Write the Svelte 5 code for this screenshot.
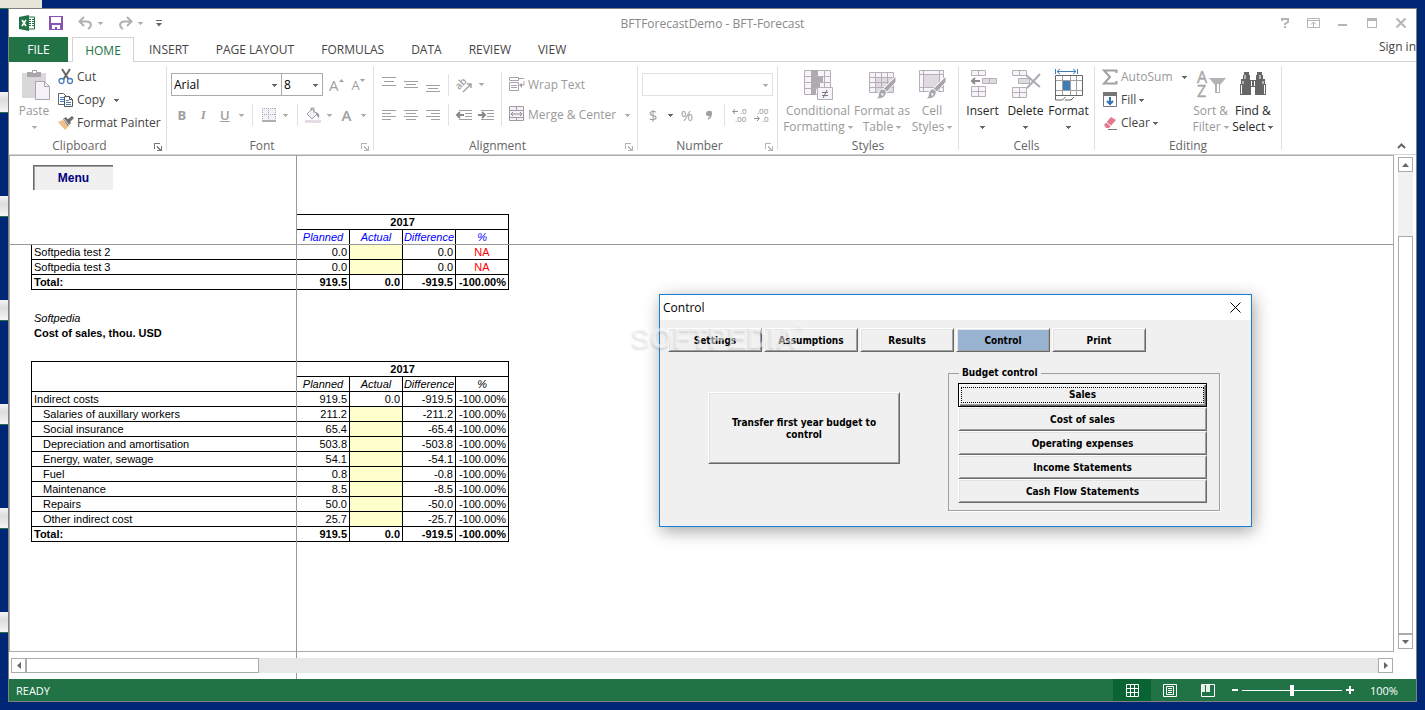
<script lang="ts">
  type Row = {
    label: string;
    planned: string;
    actual: string;
    difference: string;
    percent: string;
    kind?: 'item' | 'total';
  };

  const ribbonTabs = ['INSERT', 'PAGE LAYOUT', 'FORMULAS', 'DATA', 'REVIEW', 'VIEW'];
  const columns = ['Planned', 'Actual', 'Difference', '%'];
  const thumbs = [1, 2, 3, 4, 5, 6];

  const salesRows: Row[] = [
    { label: 'Softpedia test 2', planned: '0.0', actual: '', difference: '0.0', percent: 'NA' },
    { label: 'Softpedia test 3', planned: '0.0', actual: '', difference: '0.0', percent: 'NA' },
    { label: 'Total:', planned: '919.5', actual: '0.0', difference: '-919.5', percent: '-100.00%', kind: 'total' }
  ];

  const costRows: Row[] = [
    { label: 'Indirect costs', planned: '919.5', actual: '0.0', difference: '-919.5', percent: '-100.00%' },
    { label: 'Salaries of auxillary workers', planned: '211.2', actual: '', difference: '-211.2', percent: '-100.00%', kind: 'item' },
    { label: 'Social insurance', planned: '65.4', actual: '', difference: '-65.4', percent: '-100.00%', kind: 'item' },
    { label: 'Depreciation and amortisation', planned: '503.8', actual: '', difference: '-503.8', percent: '-100.00%', kind: 'item' },
    { label: 'Energy, water, sewage', planned: '54.1', actual: '', difference: '-54.1', percent: '-100.00%', kind: 'item' },
    { label: 'Fuel', planned: '0.8', actual: '', difference: '-0.8', percent: '-100.00%', kind: 'item' },
    { label: 'Maintenance', planned: '8.5', actual: '', difference: '-8.5', percent: '-100.00%', kind: 'item' },
    { label: 'Repairs', planned: '50.0', actual: '', difference: '-50.0', percent: '-100.00%', kind: 'item' },
    { label: 'Other indirect cost', planned: '25.7', actual: '', difference: '-25.7', percent: '-100.00%', kind: 'item' },
    { label: 'Total:', planned: '919.5', actual: '0.0', difference: '-919.5', percent: '-100.00%', kind: 'total' }
  ];

  const dialogTabs = ['Settings', 'Assumptions', 'Results', 'Control', 'Print'];
  const budgetLinks = ['Sales', 'Cost of sales', 'Operating expenses', 'Income Statements', 'Cash Flow Statements'];

  let activeTab = $state('Control');
  let activeBudget = $state('Sales');
  let dialogOpen = $state(true);
  let fontName = $state('Arial');
  let fontSize = $state('8');
  let zoom = $state(50);
</script>

{#snippet caret(dark = false)}
  <svg class="caret" class:dark width="5" height="3" viewBox="0 0 5 3" aria-hidden="true"><path d="M0 0h5v1H4v1H3v1H2V2H1V1H0z" /></svg>
{/snippet}

{#snippet launcher(dark = false)}
  <button class="launcher" class:dark aria-label="More options">
    <svg width="8" height="8" viewBox="0 0 8 8"><path d="M0 6V0h6v1H1v5zM3 3h1v1h1v1h1v1h1V3h1v5H3V7h2V6H4V5H3z" /></svg>
  </button>
{/snippet}

{#snippet lines(d: string)}
  <svg width="14" height="14" viewBox="0 0 14 14" aria-hidden="true"><path {d} fill="none" stroke="#a0a0a0" shape-rendering="crispEdges" /></svg>
{/snippet}

{#snippet brush()}
  <path d="M30 8v6l-9 10-4-3z" fill="#a8a6aa" stroke="#fff" stroke-width="1" />
  <path d="M16 21c3 0 5 2 4 5-1 3-4 5-10 5 3-2 2-4 3-7 1-2 2-3 3-3z" fill="#a8a6aa" stroke="#fff" />
  <path d="M15 25l3 1-2 2z" fill="#fff" />
{/snippet}

{#snippet gridColumns()}
  <colgroup>
    <col class="label-col" />
    {#each columns as column (column)}<col />{/each}
  </colgroup>
{/snippet}

{#snippet bodyRows(rows: Row[])}
  {#each rows as row}
    <tr class:total={row.kind === 'total'}>
      <th scope="row" class:item={row.kind === 'item'}>{row.label}</th>
      <td>{row.planned}</td>
      <td class:entry={row.actual === ''}>{row.actual}</td>
      <td>{row.difference}</td>
      <td class:na={row.percent === 'NA'}>{row.percent}</td>
    </tr>
  {/each}
{/snippet}

<div class="desktop">
  <div class="behind"></div>
  <div class="strip">
    {#each thumbs as thumb (thumb)}
      <span class="thumb"></span>
    {/each}
  </div>

  <div class="window">
    <header class="titlebar">
      <div class="quick">
        <svg class="logo" width="16" height="16" viewBox="0 0 16 16" aria-hidden="true">
          <path d="M9 2h6.500v12H9z" fill="#fff" stroke="#217346" />
          <path d="M10 4h2v1h-2zM13 4h2v1h-2zM10 6h2v1h-2zM13 6h2v1h-2zM10 8h2v1h-2zM13 8h2v1h-2zM10 10h2v1h-2zM13 10h2v1h-2z" fill="#217346" />
          <path d="M0 2l10-2v16L0 14z" fill="#217346" />
          <path d="M3 5l4 6M7 5l-4 6" stroke="#fff" stroke-width="1.6" />
        </svg>
        <button class="qat save" aria-label="Save">
          <svg width="14" height="14" viewBox="0 0 14 14"><path d="M0 0h14v14H0zM2 1v6h10V1zM3 9v4h3v-2h2v2h3V9z" fill="#8855b0" fill-rule="evenodd" /></svg>
        </button>
        <button class="qat" aria-label="Undo">
          <svg width="15" height="13" viewBox="0 0 15 13"><path d="M6 0L1.500 4.500 6 9M2 4.500h6.500c5 0 6 5 1.500 7.500" fill="none" stroke="#b0b0b0" stroke-width="2" /></svg>
        </button>
        <button class="qat drop" aria-label="Undo list">{@render caret()}</button>
        <button class="qat redo" aria-label="Redo">
          <svg width="15" height="13" viewBox="0 0 15 13"><path d="M9 0l4.500 4.500L9 9M13 4.500H6.500c-5 0-6 5-1.500 7.500" fill="none" stroke="#b0b0b0" stroke-width="2" /></svg>
        </button>
        <button class="qat drop" aria-label="Redo list">{@render caret()}</button>
        <button class="qat custom" aria-label="Customize toolbar">
          <svg width="6" height="7" viewBox="0 0 6 7"><path d="M0 0h6v1H0zM0 3h6L3 6.500z" fill="#666" /></svg>
        </button>
      </div>
      <span class="title">BFTForecastDemo - BFT-Forecast</span>
      <div class="controls">
        <button aria-label="Help"><svg width="8" height="10" viewBox="0 0 8 10"><path d="M1 3V1h6v3L4 6v1M4 8v2" fill="none" stroke="#b5b5b5" stroke-width="2" /></svg></button>
        <button aria-label="Ribbon display options"><svg width="13" height="10" viewBox="0 0 13 10"><path d="M.5.5h12v9H.5zM0 2.500h13M6.500 9V4M4 6.500L6.500 4 9 6.500" fill="none" stroke="#b5b5b5" /></svg></button>
        <button aria-label="Minimize"><svg width="10" height="10" viewBox="0 0 10 10"><path d="M0 6h9v2H0z" fill="#b5b5b5" /></svg></button>
        <button aria-label="Maximize"><svg width="10" height="10" viewBox="0 0 10 10"><path d="M0 0h10v10H0zM1 3v6h8V3z" fill="#b5b5b5" fill-rule="evenodd" /></svg></button>
        <button aria-label="Close"><svg width="10" height="10" viewBox="0 0 10 10"><path d="M.5.5l9 9M9.500.5l-9 9" stroke="#b5b5b5" stroke-width="2" /></svg></button>
      </div>
    </header>

    <nav class="tabs">
      <button class="file">FILE</button>
      <button class="home">HOME</button>
      <div class="others">
        {#each ribbonTabs as tab}
          <button class="tab">{tab}</button>
        {/each}
      </div>
      <a class="signin" href="#signin">Sign in</a>
    </nav>

    <div class="ribbon">
      <section class="group clipboard">
        <div class="content">
          <button class="big off paste">
            <svg width="32" height="34" viewBox="0 0 32 34" aria-hidden="true">
              <path d="M4 5h24v25H4z" fill="#d9d7da" />
              <path d="M9 4h5V2h5v2h4v5H9z" fill="#a9a7aa" />
              <path d="M15 3h3v2h-3z" fill="#fff" />
              <path d="M17.500 13.500h9l5 5v13h-14z" fill="#f5f1f8" stroke="#a9a7aa" />
              <path d="M26.500 13.500v5h5" fill="none" stroke="#a9a7aa" />
            </svg>
            <span>Paste</span>
            <span>{@render caret()}</span>
          </button>
          <div class="stack">
            <button class="small">
              <svg width="16" height="16" viewBox="0 0 16 16" aria-hidden="true">
                <path d="M4 0l7 11M12 0L5 11" stroke="#666" stroke-width="2" />
                <circle cx="3.500" cy="12" r="2.500" fill="#fff" stroke="#4a7ebb" stroke-width="1.300" />
                <circle cx="12" cy="12" r="2.500" fill="#fff" stroke="#4a7ebb" stroke-width="1.300" />
              </svg>
              Cut
            </button>
            <button class="small">
              <svg width="16" height="16" viewBox="0 0 16 16" aria-hidden="true">
                <path d="M.5 1.500h5l3 3v8h-8z" fill="#fff" stroke="#666" />
                <path d="M2 5.500h4M2 7.500h4M2 9.500h4" stroke="#4a7ebb" />
                <path d="M6.500 4.500h5l3 3v7h-8z" fill="#fff" stroke="#555" />
                <path d="M11.500 4.500v3h3" fill="none" stroke="#555" />
                <path d="M8 8.500h3M8 10.500h5M8 12.500h5" stroke="#4a7ebb" />
              </svg>
              Copy <span class="copy-drop">{@render caret(true)}</span>
            </button>
            <button class="small">
              <svg width="16" height="16" viewBox="0 0 16 16" aria-hidden="true">
                <path d="M0 7l5-2 6 6-4 4z" fill="#ecc287" />
                <path d="M5 4l3-2 5 6-3 3z" fill="#6d6d6d" />
                <path d="M9 5l5-4 2 2-5 5z" fill="#6d6d6d" />
                <path d="M6 4l5 6" stroke="#fff" stroke-width=".8" />
              </svg>
              Format Painter
            </button>
          </div>
        </div>
        <div class="caption">Clipboard {@render launcher(true)}</div>
      </section>

      <section class="group font">
        <div class="content rows">
          <div class="line">
            <label class="combo name">
              <select aria-label="Font" bind:value={fontName}><option>Arial</option></select>
              {@render caret(true)}
            </label>
            <label class="combo size">
              <select aria-label="Font size" bind:value={fontSize}><option>8</option></select>
              {@render caret(true)}
            </label>
            <button class="tool glyph grow" aria-label="Increase font size">A<svg width="5" height="12" viewBox="0 0 5 12"><path d="M0 3l2.500-3L5 3z" fill="#a0a0a0" /></svg></button>
            <button class="tool glyph less" aria-label="Decrease font size">A<svg width="5" height="12" viewBox="0 0 5 12"><path d="M0 0l2.500 3L5 0z" fill="#a0a0a0" /></svg></button>
          </div>
          <div class="line">
            <button class="tool bold">B</button>
            <button class="tool italic">I</button>
            <button class="tool underline">U</button>
            <button class="tool narrow" aria-label="Underline style">{@render caret()}</button>
            <i class="sep"></i>
            <button class="tool" aria-label="Borders">
              <svg width="14" height="14" viewBox="0 0 14 14"><path d="M0 0h14v12H0z" fill="#f5f1f8" /><path d="M0 .5h14M.5 0v13M13.500 0v13M6.500 0v13M0 6.500h14" stroke="#a9a7aa" stroke-dasharray="1 1" /><path d="M0 13h14" stroke="#b0aeb1" stroke-width="2" /></svg>
            </button>
            <button class="tool narrow" aria-label="Border style">{@render caret()}</button>
            <i class="sep"></i>
            <button class="tool" aria-label="Fill colour">
              <svg width="16" height="16" viewBox="0 0 16 16"><path d="M2 7l5-5 5 5-5 5zM6 4V1h3v5" fill="#f5f1f8" stroke="#a09ea2" /><path d="M11 5c3 1 4 3 3 6-2-1-3-3-3-6z" fill="#a09ea2" /><path d="M0 13h16v3H0z" fill="#e3dde3" /></svg>
            </button>
            <button class="tool narrow" aria-label="Fill colour list">{@render caret()}</button>
            <button class="tool glyph strong">A</button>
            <button class="tool narrow" aria-label="Font colour list">{@render caret()}</button>
          </div>
        </div>
        <div class="caption">Font {@render launcher()}</div>
      </section>

      <section class="group alignment">
        <div class="content">
          <div class="rows">
            <div class="line">
              <button class="tool" aria-label="Top align">{@render lines('M0 -.5h14M2 3.500h10M0 7.500h14')}</button>
              <button class="tool" aria-label="Middle align">{@render lines('M0 3.500h14M2 6.500h10M0 9.500h14')}</button>
              <button class="tool" aria-label="Bottom align">{@render lines('M0 7.500h14M2 10.500h10M0 13.500h14')}</button>
              <i class="sep close"></i>
              <button class="tool" aria-label="Orientation">
                <svg width="16" height="16" viewBox="0 0 16 16"><text x="0" y="12" transform="rotate(-45 3 9)" font-family="Open Sans, sans-serif" font-size="10" font-weight="600" fill="#a0a0a0">ab</text><path d="M7 15l8-8M11 7h4v4" fill="none" stroke="#a0a0a0" stroke-width="1.400" /></svg>
              </button>
              <button class="tool narrow" aria-label="Orientation list">{@render caret()}</button>
            </div>
            <div class="line">
              <button class="tool" aria-label="Align left">{@render lines('M0 2.500h14M0 5.500h9M0 8.500h14M0 11.500h9')}</button>
              <button class="tool" aria-label="Center">{@render lines('M0 2.500h14M2 5.500h10M0 8.500h14M2 11.500h10')}</button>
              <button class="tool" aria-label="Align right">{@render lines('M0 2.500h14M5 5.500h9M0 8.500h14M5 11.500h9')}</button>
              <i class="sep close"></i>
              <button class="tool" aria-label="Decrease indent">
                <svg width="16" height="12" viewBox="0 0 16 12"><path d="M3 1.500h13M9 4.500h7M9 7.500h7M3 10.500h13" stroke="#a0a0a0" /><path d="M8 6H1M4 3L1 6l3 3" fill="none" stroke="#8a8a8a" stroke-width="2" /></svg>
              </button>
              <button class="tool" aria-label="Increase indent">
                <svg width="16" height="12" viewBox="0 0 16 12"><path d="M3 1.500h13M9 4.500h7M9 7.500h7M3 10.500h13" stroke="#a0a0a0" /><path d="M0 6h7M4 3l3 3-3 3" fill="none" stroke="#8a8a8a" stroke-width="2" /></svg>
              </button>
            </div>
          </div>
          <i class="sep tall"></i>
          <div class="rows wide">
            <button class="small off">
              <svg width="16" height="16" viewBox="0 0 16 16" aria-hidden="true"><path d="M.5 1.500h9v3h-9zM9 2.500h6M.5 6.500h9v8h-9zM2 9.500h6M2 11.500h6M15 5v4h-4" fill="none" stroke="#a9a2ad" /><path d="M10 9l3-2v5z" fill="#a0a0a0" /></svg>
              Wrap Text
            </button>
            <button class="small off">
              <svg width="16" height="16" viewBox="0 0 16 16" aria-hidden="true"><path d="M.5.5h14v14H.5zM0 4.500h15M0 11.500h15M7.500 0v4M7.500 11v4" fill="#f5f1f8" stroke="#a09aa4" /><path d="M2 8h11M4 6L2 8l2 2M11 6l2 2-2 2" fill="none" stroke="#8d8d8d" /></svg>
              Merge &amp; Center <span class="merge-drop">{@render caret()}</span>
            </button>
          </div>
        </div>
        <div class="caption">Alignment {@render launcher()}</div>
      </section>

      <section class="group number">
        <div class="content rows">
          <div class="line">
            <label class="combo format">
              <select aria-label="Number format" disabled><option></option></select>
              {@render caret()}
            </label>
          </div>
          <div class="line">
            <button class="tool glyph dollar">$</button>
            <button class="tool narrow" aria-label="Currency list">{@render caret(true)}</button>
            <button class="tool glyph percent">%</button>
            <button class="tool" aria-label="Comma style"><svg width="5" height="9" viewBox="0 0 5 9"><path d="M2 0a2 2 0 0 1 3 2c0 3-1 5-4 7V7l2-2H1a2 2 0 0 1 1-5z" fill="#a0a0a0" /></svg></button>
            <i class="sep close"></i>
            <button class="tool decimals" aria-label="Increase decimal">
              <svg width="16" height="14" viewBox="0 0 16 14"><path d="M1 3.500h5M3 1L.7 3.500 3 6" fill="none" stroke="#909090" /><text x="8" y="6" font-size="8" font-family="Open Sans, sans-serif" fill="#8a8a8a">.0</text><text x="3" y="14" font-size="8" font-family="Open Sans, sans-serif" fill="#8a8a8a">.00</text></svg>
            </button>
            <button class="tool decimals" aria-label="Decrease decimal">
              <svg width="16" height="14" viewBox="0 0 16 14"><path d="M0 10.500h5M3 8l2.300 2.500L3 13" fill="none" stroke="#909090" /><text x="3" y="6" font-size="8" font-family="Open Sans, sans-serif" fill="#8a8a8a">.00</text><text x="8" y="14" font-size="8" font-family="Open Sans, sans-serif" fill="#8a8a8a">.0</text></svg>
            </button>
          </div>
        </div>
        <div class="caption">Number {@render launcher()}</div>
      </section>

      <section class="group styles">
        <div class="content">
          <button class="big off conditional">
            <svg width="32" height="34" viewBox="0 0 32 34" aria-hidden="true">
              <path d="M2.500 2.500h26v24h-26zM2 8.500h27M2 14.500h27M2 20.500h27M22.500 2v25" fill="#f7f3fa" stroke="#b4b0b6" />
              <path d="M9 2h7v6H9zM9 9h12v5H9zM9 15h9v5H9zM9 21h5v6H9z" fill="#adabaf" />
              <path d="M15.500 19.500h15v12h-15z" fill="#f7f3fa" stroke="#b4b0b6" />
              <path d="M20 24.500h6M20 27.500h6M25 22l-4 8" stroke="#77757a" />
            </svg>
            <span>Conditional</span>
            <span>Formatting {@render caret()}</span>
          </button>
          <button class="big off astable">
            <svg width="32" height="34" viewBox="0 0 32 34" aria-hidden="true">
              <path d="M3.500 4.500h24v20h-24z" fill="#f7f3fa" stroke="#b4b0b6" />
              <path d="M10 10h17v14H10z" fill="#dedadf" />
              <path d="M3 9.500h25M3 14.500h25M3 19.500h25M9.500 4v21M15.500 4v21M21.500 4v21" stroke="#b4b0b6" />
              {@render brush()}
            </svg>
            <span>Format as</span>
            <span>Table {@render caret()}</span>
          </button>
          <button class="big off cell">
            <svg width="32" height="34" viewBox="0 0 32 34" aria-hidden="true">
              <path d="M3.500 2.500h24v21h-24z" fill="#f7f3fa" stroke="#b4b0b6" />
              <path d="M8 7h16v12H8z" fill="#dedadf" />
              <path d="M3 6.500h25M3 19.500h25M7.500 2v22M23.500 2v22" stroke="#b4b0b6" />
              {@render brush()}
            </svg>
            <span>Cell</span>
            <span>Styles {@render caret()}</span>
          </button>
        </div>
        <div class="caption">Styles</div>
      </section>

      <section class="group cells">
        <div class="content">
          <button class="big">
            <svg width="32" height="34" viewBox="0 0 32 34" aria-hidden="true">
              <path d="M4.500 2.500h14v5h-14zM11.500 2v6M4.500 18.500h14v10h-14zM11.500 18v10M4 23.500h15" fill="#f7f3fa" stroke="#b4b0b6" />
              <path d="M15.500 10.500h14v5h-14zM22.500 10v6" fill="#dedadf" stroke="#b4b0b6" />
              <path d="M5 13h8M8 10l-3 3 3 3" fill="none" stroke="#8d8b8f" stroke-width="2" />
            </svg>
            <span>Insert</span>
            <span>{@render caret(true)}</span>
          </button>
          <button class="big">
            <svg width="32" height="34" viewBox="0 0 32 34" aria-hidden="true">
              <path d="M2.500 2.500h14v5h-14zM9.500 2v6M2.500 19.500h14v10h-14zM9.500 19v10M2 24.500h15" fill="#f7f3fa" stroke="#b4b0b6" />
              <path d="M8.500 10.500h11v5h-11z" fill="#dedadf" stroke="#b4b0b6" />
              <path d="M16 7l14 12M30 6L17 20" stroke="#adabaf" stroke-width="2" />
            </svg>
            <span>Delete</span>
            <span>{@render caret(true)}</span>
          </button>
          <button class="big">
            <svg width="32" height="34" viewBox="0 0 32 34" aria-hidden="true">
              <path d="M2.500 1v5M24.500 1v5M4 3.500h19M7 1L4 3.500 7 6M20 1l3 2.500L20 6" fill="none" stroke="#3f7cb8" />
              <path d="M2.500 7.500h27v20h-27z" fill="#fff" stroke="#666" />
              <path d="M3 12.500h26M3 22.500h26M9.500 8v19M17.500 8v19M23.500 8v19" stroke="#a0a0a0" />
              <path d="M10 13h7v9h-7z" fill="#3f7cb8" />
              <path d="M2.500 27v5h7l3-3M12 32h6l3-3" fill="none" stroke="#666" />
            </svg>
            <span>Format</span>
            <span>{@render caret(true)}</span>
          </button>
        </div>
        <div class="caption">Cells</div>
      </section>

      <section class="group editing">
        <div class="content">
          <div class="stack">
            <button class="small off">
              <svg width="16" height="16" viewBox="0 0 16 16" aria-hidden="true"><path d="M14.500 4V1.500H2l6 6.500-6 6.500h12.500V12" fill="none" stroke="#a0a0a0" stroke-width="2" /></svg>
              AutoSum <span class="sum-drop">{@render caret(true)}</span>
            </button>
            <button class="small">
              <svg width="16" height="16" viewBox="0 0 16 16" aria-hidden="true"><path d="M1.500 1.500h13v13h-13z" fill="#fff" stroke="#777" /><path d="M1 0h14v4H1z" fill="#777" /><path d="M8 5v7M5 9l3 3 3-3" fill="none" stroke="#2e75b6" stroke-width="2" /></svg>
              <span>Fill {@render caret(true)}</span>
            </button>
            <button class="small">
              <svg width="16" height="16" viewBox="0 0 16 16" aria-hidden="true"><path d="M2 10L9 2l5 3-7 8H4z" fill="#e5798f" /><path d="M4 7l5 4" stroke="#fff" /><path d="M6 14.500h9" stroke="#777" /></svg>
              <span>Clear {@render caret(true)}</span>
            </button>
          </div>
          <button class="big off">
            <svg width="32" height="34" viewBox="0 0 32 34" aria-hidden="true">
              <text x="2" y="15" font-family="Open Sans, sans-serif" font-size="16" fill="#a6a6a6" stroke="#a6a6a6" stroke-width=".4">A</text>
              <text x="2" y="29" font-family="Open Sans, sans-serif" font-size="16" fill="#a6a6a6" stroke="#a6a6a6" stroke-width=".4">Z</text>
              <path d="M14 10h17l-6 7v8h-5v-8z" fill="#b4b2b5" />
              <path d="M22 16h2v8h-2z" fill="#fff" />
            </svg>
            <span>Sort &amp;</span>
            <span>Filter {@render caret()}</span>
          </button>
          <button class="big">
            <svg width="32" height="34" viewBox="0 0 32 34" aria-hidden="true">
              <path d="M7 4h5v3h1v5h6V7h1V4h5v3h1v4h2v5h1v11H18v-8h-4v8H3V16h1v-5h2V7h1z" fill="#666" />
              <path d="M8 7v4M23 7v4M6 13v3M26 13v3M4.500 17v9M27.500 17v9M14.500 13v5M17.500 13v5" stroke="#fff" />
            </svg>
            <span>Find &amp;</span>
            <span>Select {@render caret(true)}</span>
          </button>
        </div>
        <div class="caption">Editing</div>
      </section>

      <button class="collapse" aria-label="Collapse the ribbon">
        <svg width="9" height="6" viewBox="0 0 9 6"><path d="M1 5l3.500-3.500L8 5" fill="none" stroke="#666" stroke-width="2" /></svg>
      </button>
    </div>

    <main class="workbook">
      <div class="sheet">
        <div class="frozen">
          <button class="menu">Menu</button>
          <table class="grid head">
            {@render gridColumns()}
            <tbody>
              <tr><td class="blank" rowspan="2"></td><th class="year" colspan="4">2017</th></tr>
              <tr class="names">
                {#each columns as column}<th>{column}</th>{/each}
              </tr>
            </tbody>
          </table>
        </div>
        <table class="grid">
          {@render gridColumns()}
          <tbody>{@render bodyRows(salesRows)}</tbody>
        </table>
        <div class="heading">
          <em>Softpedia</em>
          <strong>Cost of sales, thou. USD</strong>
        </div>
        <table class="grid capped">
          {@render gridColumns()}
          <thead>
            <tr><td rowspan="2"></td><th class="year" colspan="4">2017</th></tr>
            <tr class="names">
              {#each columns as column}<th>{column}</th>{/each}
            </tr>
          </thead>
          <tbody>{@render bodyRows(costRows)}</tbody>
        </table>
      </div>

      <div class="vscroll">
        <button class="arrow" aria-label="Scroll up"><svg width="7" height="4" viewBox="0 0 7 4"><path d="M0 4l3.500-4L7 4z" fill="#666" /></svg></button>
        <div class="track"></div>
        <div class="grip"></div>
        <button class="arrow" aria-label="Scroll down"><svg width="7" height="4" viewBox="0 0 7 4"><path d="M0 0l3.500 4L7 0z" fill="#666" /></svg></button>
      </div>

      <div class="hscroll">
        <button class="arrow" aria-label="Scroll left"><svg width="4" height="7" viewBox="0 0 4 7"><path d="M4 0L0 3.500 4 7z" fill="#666" /></svg></button>
        <div class="grip"></div>
        <div class="track"></div>
        <button class="arrow" aria-label="Scroll right"><svg width="4" height="7" viewBox="0 0 4 7"><path d="M0 0l4 3.500L0 7z" fill="#666" /></svg></button>
      </div>
    </main>

    <footer class="status">
      <span class="ready">READY</span>
      <button class="view on" aria-label="Normal view"><svg width="13" height="13" viewBox="0 0 13 13"><path d="M.5.5h12v12H.5zM4.500 0v13M8.500 0v13M0 4.500h13M0 8.500h13" fill="none" stroke="#fff" /></svg></button>
      <button class="view" aria-label="Page layout view"><svg width="14" height="13" viewBox="0 0 14 13"><path d="M.5.5h13v12H.5zM3.500 2.500h7v8h-7zM5 4.500h4M5 6.500h4M5 8.500h4" fill="none" stroke="#fff" /></svg></button>
      <button class="view" aria-label="Page break preview"><svg width="14" height="13" viewBox="0 0 14 13"><path d="M.5.5h13v12H.5z" fill="none" stroke="#fff" /><path d="M1 1h3v7H1zM5 1h4v7H5z" fill="#e4f0e8" /></svg></button>
      <button class="step" aria-label="Zoom out"><svg width="8" height="8" viewBox="0 0 8 8"><path d="M1 3h6v2H1z" fill="#fff" /></svg></button>
      <input class="zoom" type="range" min="0" max="100" aria-label="Zoom" bind:value={zoom} />
      <button class="step" aria-label="Zoom in"><svg width="8" height="8" viewBox="0 0 8 8"><path d="M0 3h8v2H0zM3 0h2v8H3z" fill="#fff" /></svg></button>
      <span class="percentage">100%</span>
    </footer>
  </div>

  {#if dialogOpen}
    <div class="dialog" role="dialog" aria-label="Control">
      <div class="dialog-title">
        <span>Control</span>
        <button aria-label="Close dialog" onclick={() => (dialogOpen = false)}>
          <svg width="11" height="11" viewBox="0 0 11 11"><path d="M.5.5l10 10M10.500.5l-10 10" stroke="#000" /></svg>
        </button>
      </div>
      <div class="dialog-tabs">
        {#each dialogTabs as tab}
          <button class="classic" class:current={activeTab === tab} onclick={() => (activeTab = tab)}>{tab}</button>
        {/each}
      </div>
      <div class="dialog-body">
        <button class="classic transfer">Transfer first year budget to control</button>
        <fieldset>
          <legend>Budget control</legend>
          {#each budgetLinks as link}
            <button class="classic" class:focused={activeBudget === link} onclick={() => (activeBudget = link)}><span>{link}</span></button>
          {/each}
        </fieldset>
      </div>
    </div>
  {/if}
  <div class="watermark">SOFTPEDIA<sup>®</sup></div>
</div>

<style>
  :global(body) {
    margin: 0;
    background: #002776;
  }

  .desktop {
    position: relative;
    box-sizing: border-box;
    display: grid;
    grid-template-columns: 8px minmax(0, 1fr);
    min-height: 100vh;
    padding: 8px 8px 8px 0;
    background: #002776;
    font-family: "Open Sans", "Noto Sans", sans-serif;
    font-size: 12px;
    color: #444;
  }

  button {
    padding: 0;
    border: 0;
    background: none;
    font: inherit;
    color: inherit;
  }

  svg {
    display: block;
    flex: none;
    overflow: visible;
  }

  .behind {
    position: absolute;
    top: 0;
    left: 0;
    width: 42px;
    height: 9px;
    background: #e6e6da;
    border-bottom: 1px solid #217346;
    box-sizing: border-box;
  }

  .strip {
    display: flex;
    flex-direction: column;
    gap: 83px;
    padding-top: 84px;
  }

  .thumb {
    box-sizing: border-box;
    height: 21px;
    background: linear-gradient(#f4f4f4, #dcdcdc 40%, #f6f6f6);
    border-bottom: 1px solid #217346;
  }

  .window {
    position: relative;
    display: flex;
    flex-direction: column;
    border: 1px solid #808080;
    background: #fff;
  }

  /* title bar */
  .titlebar {
    display: grid;
    grid-template-columns: 1fr auto 1fr;
    align-items: center;
    height: 28px;
  }

  .title {
    color: #888;
  }

  .quick {
    display: flex;
    align-items: center;
    padding-left: 10px;
  }

  .qat {
    display: flex;
    justify-content: center;
    width: 15px;
  }

  .qat.save {
    width: 14px;
    margin: 0 15px 0 14px;
  }

  .qat.drop {
    width: 14px;
  }

  .qat.redo {
    margin-left: 11px;
  }

  .qat.custom {
    width: 24px;
  }

  .controls {
    display: flex;
    justify-content: flex-end;
    padding-right: 1px;
  }

  .controls button {
    display: flex;
    justify-content: center;
    width: 29px;
  }

  /* ribbon tabs */
  .tabs {
    display: flex;
    height: 25px;
    box-sizing: border-box;
    box-shadow: inset 0 -1px #d4d4d4;
  }

  .file {
    width: 59px;
    background: #217346;
    color: #fff;
  }

  .home {
    box-sizing: border-box;
    width: 62px;
    margin-left: 4px;
    border: 1px solid #d4d4d4;
    border-bottom: 0;
    background: #fff;
    color: #217346;
  }

  .others {
    display: flex;
    padding-left: 2px;
    gap: 1px;
  }

  .tab {
    padding: 0 13px;
  }

  .signin {
    margin-left: auto;
    line-height: 20px;
    color: #444;
    text-decoration: none;
  }

  /* ribbon */
  .ribbon {
    display: flex;
    height: 92px;
    border-bottom: 1px solid #d4d4d4;
  }

  .group {
    box-sizing: border-box;
    display: flex;
    flex-direction: column;
    flex: none;
    height: 84px;
    margin-top: 4px;
    border-right: 1px solid #e1e1e1;
  }

  .clipboard { width: 158px; }
  .font { width: 207px; }
  .alignment { width: 264px; }
  .number { width: 140px; }
  .styles { width: 181px; }
  .cells { width: 136px; }
  .editing { width: 187px; }

  .content {
    display: flex;
    flex: 1;
    padding: 0 4px;
  }

  .styles .content { padding: 0 3px; }
  .cells .content { padding: 0 2px; }
  .editing .content { padding: 0 7px; }
  .clipboard .content { padding: 0 9px; }

  .caption {
    display: flex;
    justify-content: center;
    position: relative;
    height: 8px;
    line-height: 8px;
    padding-right: 16px;
    color: #666;
  }

  .styles .caption,
  .cells .caption,
  .editing .caption {
    padding-right: 0;
  }

  .launcher {
    position: absolute;
    right: 4px;
    top: 1px;
    fill: #b5b5b5;
  }

  .launcher.dark {
    fill: #777;
  }

  .caret {
    display: inline-block;
    vertical-align: middle;
    fill: #b0b0b0;
  }

  .caret.dark {
    fill: #666;
  }

  .big {
    display: flex;
    flex-direction: column;
    align-items: center;
    width: 43px;
    padding-top: 2px;
    line-height: 16px;
    white-space: nowrap;
    color: #262626;
  }

  .big svg:first-child:not(.caret) {
    margin-bottom: 1px;
  }

  .big.paste { width: 32px; }
  .big.conditional { width: 74px; }
  .big.astable { width: 54px; }
  .big.cell { width: 46px; }

  .off {
    color: #999;
  }

  .stack {
    display: flex;
    flex-direction: column;
    gap: 2px;
  }

  .clipboard .stack {
    padding-left: 8px;
  }

  .editing .stack {
    width: 89px;
  }

  .small {
    display: flex;
    align-items: center;
    gap: 3px;
    height: 21px;
    white-space: nowrap;
  }

  .copy-drop,
  .merge-drop,
  .sum-drop {
    padding-left: 6px;
  }

  .rows {
    display: flex;
    flex-direction: column;
    gap: 8px;
    padding-top: 7px;
  }

  .rows.wide {
    padding-left: 7px;
  }

  .wide .small {
    height: 22px;
  }

  .line {
    display: flex;
    align-items: center;
    height: 23px;
  }

  .line + .line {
    height: 22px;
  }

  .tool {
    display: flex;
    align-items: center;
    justify-content: center;
    width: 22px;
    height: 22px;
    color: #a0a0a0;
    font-size: 13px;
  }

  .tool.narrow {
    width: 12px;
  }

  .bold { font-weight: 700; }
  .italic { font-family: "Liberation Serif", serif; font-style: italic; font-weight: 700; }
  .underline { font-weight: 600; text-decoration: underline; }

  .glyph {
    font-size: 15px;
  }

  .glyph.grow {
    margin-left: 2px;
  }

  .glyph.less {
    font-size: 13px;
  }

  .glyph.strong {
    font-weight: 600;
  }

  .sep {
    width: 1px;
    height: 22px;
    margin: 0 5px;
    background: #e1e1e1;
  }

  .sep.close {
    margin: 0 4px;
  }

  .sep.tall {
    height: 54px;
    margin: 6px 0 0;
  }

  .alignment .rows:first-child {
    width: 123px;
  }

  .combo {
    position: relative;
    display: block;
    box-sizing: border-box;
    height: 23px;
    border: 1px solid #ababab;
  }

  .combo select {
    display: block;
    width: 100%;
    height: 100%;
    padding: 0 2px;
    border: 0;
    background: #fff;
    appearance: none;
    font: inherit;
    color: #000;
  }

  .combo .caret {
    position: absolute;
    right: 4px;
    top: 10px;
  }

  .combo.name { width: 112px; }
  .combo.size { width: 43px; margin-left: -1px; }
  .combo.format { width: 131px; border-color: #e1e1e1; }

  .collapse {
    align-self: flex-end;
    margin: 0 10px 5px auto;
  }

  /* worksheet */
  .workbook {
    position: relative;
    display: grid;
    grid-template-columns: minmax(0, 1fr) 22px;
    grid-template-rows: 1fr 27px;
    flex: 1;
    font-family: "Liberation Sans", Arial, sans-serif;
    font-size: 11px;
    color: #000;
  }

  /* freeze line that crosses every row of the sheet */
  .workbook::after {
    content: "";
    position: absolute;
    top: 0;
    bottom: 0;
    left: 287px;
    width: 1px;
    background: #999;
  }

  .sheet {
    border: 1px solid #ababab;
  }

  .frozen {
    border-bottom: 1px solid #999;
  }

  .menu {
    display: block;
    box-sizing: border-box;
    width: 80px;
    height: 25px;
    margin: 9px 0 24px 23px;
    border-top: 1px solid #696969;
    border-left: 1px solid #696969;
    box-shadow: inset 1px 1px #a0a0a0;
    background: #f0f0f0;
    font-size: 12px;
    font-weight: 700;
    color: #000080;
  }

  .grid {
    width: 478px;
    margin-left: 21px;
    border-collapse: separate;
    border-spacing: 0;
    table-layout: fixed;
  }

  .grid col {
    width: 53px;
  }

  .grid .label-col {
    width: 266px;
  }

  .grid tr {
    height: 15px;
  }

  .grid td,
  .grid th {
    box-sizing: border-box;
    height: 15px;
    padding: 0 2px;
    border-right: 1px solid #000;
    border-bottom: 1px solid #000;
    line-height: 14px;
    font-weight: 400;
    text-align: right;
    white-space: nowrap;
  }

  .grid th[scope="row"],
  .grid thead td {
    border-left: 1px solid #000;
    border-right-color: #999;
    text-align: left;
  }

  .grid .blank {
    border: 0;
  }

  .grid .item {
    padding-left: 11px;
  }

  .grid .total > * {
    font-weight: 700;
  }

  .grid .year {
    height: 16px;
    border-top: 1px solid #000;
    font-weight: 700;
    text-align: center;
  }

  .grid.capped thead td {
    border-top: 1px solid #000;
  }

  .grid .names th {
    padding: 0;
    font-style: italic;
    text-align: center;
  }

  .head .names,
  .grid.head .names th {
    height: 14px;
    border-bottom: 0;
    color: #00f;
  }

  .grid .entry {
    background: #ffffcc;
  }

  .grid .na {
    color: #f00;
    text-align: center;
  }

  .heading {
    display: flex;
    flex-direction: column;
    padding: 21px 0 20px 24px;
    line-height: 15px;
  }

  .arrow {
    display: flex;
    align-items: center;
    justify-content: center;
    flex: none;
    box-sizing: border-box;
    width: 15px;
    height: 15px;
    border: 1px solid #ababab;
    background: #fff;
  }

  .grip {
    box-sizing: border-box;
    border: 1px solid #ababab;
    background: #fff;
  }

  .vscroll {
    display: flex;
    flex-direction: column;
    padding: 2px 3px 3px 4px;
  }

  .vscroll .track {
    height: 64px;
    background: #f1f1f1;
  }

  .vscroll .grip {
    flex: 1;
  }

  .hscroll {
    position: relative;
    z-index: 1;
    display: flex;
    height: 15px;
    margin: 6px 1px 6px 2px;
    background: #fff;
  }

  .hscroll .grip {
    width: 233px;
  }

  .hscroll .track {
    flex: 1;
    background: #e8e8e8;
  }

  /* status bar */
  .status {
    display: flex;
    align-items: center;
    height: 22px;
    background: #217346;
    font-size: 11px;
    color: #fff;
  }

  .ready {
    margin: 0 auto 0 7px;
  }

  .view {
    display: flex;
    align-items: center;
    justify-content: center;
    width: 38px;
    height: 22px;
  }

  .view.on {
    background: #0a6332;
  }

  .step {
    margin: 0 3px 0 4px;
  }

  .zoom {
    width: 100px;
    height: 12px;
    margin: 0;
    appearance: none;
    background: linear-gradient(#fff, #fff) center / 100% 1px no-repeat;
  }

  .zoom::-webkit-slider-thumb {
    appearance: none;
    width: 4px;
    height: 11px;
    background: #fff;
  }

  .percentage {
    width: 46px;
    padding-left: 13px;
    box-sizing: border-box;
    margin-right: 13px;
  }

  /* floating form */
  .dialog {
    position: absolute;
    left: 659px;
    top: 294px;
    box-sizing: border-box;
    width: 593px;
    padding-bottom: 15px;
    border: 1px solid #1a7fd0;
    background: #f0f0f0;
    box-shadow: 2px 4px 16px rgba(0, 0, 0, 0.36);
    color: #000;
  }

  .dialog-title {
    display: flex;
    align-items: center;
    justify-content: space-between;
    height: 25px;
    padding: 0 10px 0 3px;
    background: #fff;
  }

  .dialog-tabs {
    display: flex;
    gap: 2px;
    padding: 8px 8px 15px;
  }

  .dialog-tabs .classic {
    width: 94px;
  }

  .dialog-body {
    display: flex;
    align-items: flex-start;
  }

  .classic {
    box-sizing: border-box;
    height: 24px;
    padding-top: 2px;
    border: 1px solid;
    border-color: #fff #696969 #696969 #fff;
    box-shadow: inset 1px 1px #e3e3e3, inset -1px -1px #a0a0a0;
    background: #f0f0f0;
    font-family: "DejaVu Sans Condensed", "DejaVu Sans", sans-serif;
    font-size: 10px;
    font-weight: 700;
    line-height: 12px;
  }

  .classic.current {
    background: #99b4d1;
  }

  .transfer {
    width: 192px;
    height: 72px;
    margin: 25px 48px 0;
    padding: 2px 16px 0;
  }

  fieldset {
    display: flex;
    flex-direction: column;
    box-sizing: border-box;
    width: 272px;
    margin: 0;
    padding: 4px 12px 7px 9px;
    border: 1px solid #a0a0a0;
    box-shadow: 1px 1px #fff;
    font-family: "DejaVu Sans Condensed", "DejaVu Sans", sans-serif;
    font-size: 10px;
    font-weight: 700;
  }

  legend {
    margin-left: 1px;
    padding: 0 3px;
    line-height: 12px;
  }

  .classic.focused {
    padding: 1px;
    border-color: #000;
    box-shadow: inset 1px 1px #fff, inset -1px -1px #696969, inset -2px -2px #a0a0a0;
  }

  .focused span {
    display: block;
    margin: 0 1px;
    border: 1px dotted #000;
    line-height: 14px;
  }

  .watermark {
    position: absolute;
    left: 631px;
    top: 322px;
    display: flex;
    font-family: "Liberation Sans", Arial, sans-serif;
    font-size: 29px;
    line-height: 32px;
    font-weight: 700;
    color: rgba(255, 255, 255, 0.5);
    text-shadow: -1px 2px 2px rgba(0, 0, 0, 0.1);
    pointer-events: none;
  }

  .watermark sup {
    font-size: 9px;
    line-height: 12px;
  }
</style>
